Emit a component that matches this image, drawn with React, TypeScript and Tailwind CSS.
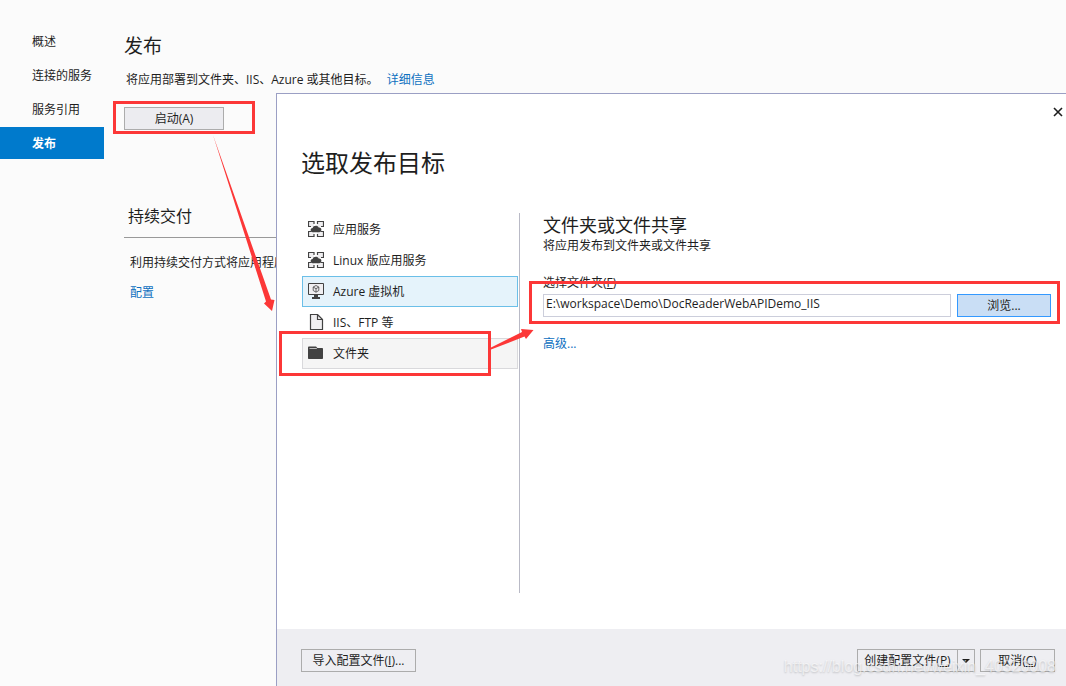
import { useState } from "react";
import type { ReactNode } from "react";

interface Target {
  id: string;
  label: string;
  icon: ReactNode;
  rowClass: string;
}

function AppServiceIcon() {
  return (
    <svg viewBox="0 0 16 16" className="mb-0.5 h-4 w-4" aria-hidden="true">
      <path d="M0 0h6v6H0ZM9 0h7v6H9ZM0 10h6v6H0ZM9 10h7v6H9Z" fill="#f0eff1" />
      <path
        d="M3 5.500H.5v-5h5.500V3M9.500 3V.5h6v5H13M3 10.500H.5v5h5.500V13M13 10.500h2.500v5h-6V13"
        fill="none"
        stroke="#424242"
        strokeWidth="1.200"
      />
      <path
        d="M4.800 11.300A2.200 2.200 0 0 1 2.600 9c0-1.200.9-2 2-2C5 5.500 6.200 4.700 7.800 4.700c1.400 0 2.400.6 2.900 1.700A2.500 2.500 0 0 1 13.400 9a2.300 2.300 0 0 1-2.300 2.300Z"
        fill="#424242"
      />
    </svg>
  );
}

function VirtualMachineIcon() {
  return (
    <svg viewBox="0 0 16 16" className="mb-0.5 h-4 w-4" aria-hidden="true">
      <path d="M.5.5h15v11H.5Z" fill="#f0eff1" stroke="#424242" />
      <path d="M6 12h4v2h2v2H4v-2h2Z" fill="#424242" />
      <path
        d="m8 2.500 2.800 1.500v3.500L8 9.200 5.200 7.500V4ZM5.200 4 8 5.700 10.800 4M8 5.700v3.500"
        fill="none"
        stroke="#424242"
        strokeWidth=".8"
      />
    </svg>
  );
}

function FileIcon() {
  return (
    <svg viewBox="0 0 16 16" className="mb-0.5 h-4 w-4" aria-hidden="true">
      <path d="M2.500.5h8l4 4v11h-12Z" fill="#f0eff1" />
      <path
        d="M2.500.5h7l5 5v10h-12ZM9.500.5v5h5"
        fill="none"
        stroke="#424242"
        strokeWidth="1.200"
      />
    </svg>
  );
}

function FolderIcon() {
  return (
    <svg viewBox="0 0 16 16" className="mb-0.5 h-4 w-4" aria-hidden="true">
      <path
        d="M0 2.500C0 2 .5 1.500 1 1.500h7L9.500 3H14c.6 0 1 .4 1 1v9c0 .6-.4 1-1 1H1c-.6 0-1-.4-1-1Z"
        fill="#424242"
      />
      <path d="M1.500 3.500h7l1-1" fill="none" stroke="#f0eff1" strokeWidth=".7" />
    </svg>
  );
}

const navItems = ["概述", "连接的服务", "服务引用", "发布"];

const targets: Target[] = [
  {
    id: "app-service",
    label: "应用服务",
    icon: <AppServiceIcon />,
    rowClass: "border-transparent",
  },
  {
    id: "linux",
    label: "Linux 版应用服务",
    icon: <AppServiceIcon />,
    rowClass: "border-transparent",
  },
  {
    id: "vm",
    label: "Azure 虚拟机",
    icon: <VirtualMachineIcon />,
    rowClass: "border-[#6bbfe8] bg-[#e5f3fb]",
  },
  {
    id: "iis",
    label: "IIS、FTP 等",
    icon: <FileIcon />,
    rowClass: "border-transparent",
  },
  {
    id: "folder",
    label: "文件夹",
    icon: <FolderIcon />,
    rowClass: "border-[#d9d9dc] bg-[#f5f5f5]",
  },
];

function Sidebar() {
  return (
    <nav className="w-[104px] shrink-0 pt-[25px]">
      <ul className="flex flex-col gap-0.5">
        {navItems.map((item) => (
          <li key={item}>
            <a
              href="#"
              className={
                item === "发布"
                  ? "flex h-8 items-center bg-[#007acc] pt-0.5 pl-8 font-bold text-white"
                  : "flex h-8 items-center pt-0.5 pl-8"
              }
            >
              {item}
            </a>
          </li>
        ))}
      </ul>
    </nav>
  );
}

function PublishPage() {
  return (
    <main className="min-w-0 flex-1 pt-8 pl-5">
      <h1 className="text-[19px] leading-7">发布</h1>
      <p className="mt-2 flex h-6 items-center gap-2 pl-0.5">
        <span>将应用部署到文件夹、IIS、Azure 或其他目标。</span>
        <a href="#" className="text-[#0e70c0]">
          详细信息
        </a>
      </p>
      <button
        type="button"
        className="mt-[15px] block h-[23px] w-[100px] border border-[#acacac] bg-[#ececf0]"
      >
        启动(A)
      </button>
      <section className="mt-[70px]">
        <h2 className="border-b border-[#999] pb-[5px] pl-1 text-base leading-8">
          持续交付
        </h2>
        <p className="mt-[15px] pl-1.5 leading-5">
          利用持续交付方式将应用程序自动发布到 Azure。
        </p>
        <a href="#" className="mt-2.5 block pl-1.5 leading-5 text-[#0e70c0]">
          配置
        </a>
      </section>
    </main>
  );
}

function FolderForm() {
  const [path, setPath] = useState(
    "E:\\workspace\\Demo\\DocReaderWebAPIDemo_IIS"
  );

  return (
    <section className="min-w-0 flex-1 pr-[15px] pl-[23px]">
      <h2 className="text-lg leading-6">文件夹或文件共享</h2>
      <p className="leading-[18px]">将应用发布到文件夹或文件共享</p>
      <label htmlFor="folder" className="mt-[18px] block leading-5">
        选择文件夹(<u>F</u>)
      </label>
      <div className="mt-px flex gap-1.5">
        <input
          id="folder"
          value={path}
          onChange={(event) => setPath(event.target.value)}
          className="h-[23px] min-w-0 flex-1 border border-[#cccedb] bg-white px-0.5 pb-1 outline-none"
        />
        <button
          type="button"
          className="h-[23px] w-[94px] border border-[#3399ff] bg-[#c9def5]"
        >
          浏览...
        </button>
      </div>
      <a href="#" className="mt-[17px] block leading-5 text-[#0e70c0]">
        高级...
      </a>
    </section>
  );
}

function PublishDialog() {
  return (
    <div
      role="dialog"
      aria-labelledby="dialog-title"
      className="absolute top-[93px] right-0 bottom-0 left-[276px] flex flex-col border-t border-l border-[#9b9fc4] bg-white"
    >
      <div className="flex h-9 items-center justify-end pr-0.5">
        <button type="button" aria-label="关闭" className="p-px">
          <svg viewBox="0 0 10 10" className="h-2.5 w-2.5" aria-hidden="true">
            <path d="m1 1 8 8M9 1 1 9" stroke="#1e1e1e" strokeWidth="1.600" />
          </svg>
        </button>
      </div>
      <h1 id="dialog-title" className="mt-[15px] pl-6 text-2xl leading-9">
        选取发布目标
      </h1>
      <div className="mt-8 flex min-h-[380px] flex-1">
        <ul className="ml-[25px] w-[218px] shrink-0 border-r border-[#b9bac6] pt-px pr-px">
          {targets.map((target) => (
            <li key={target.id}>
              <button
                type="button"
                className={`flex h-[31px] w-full items-center gap-[9px] border pl-[5px] ${target.rowClass}`}
              >
                {target.icon}
                {target.label}
              </button>
            </li>
          ))}
        </ul>
        <FolderForm />
      </div>
      <footer className="mt-9 flex h-[57px] shrink-0 items-start bg-[#eeeef2] pt-5 pr-[11px] pl-6">
        <button
          type="button"
          className="h-[23px] w-[115px] border border-[#acacac]"
        >
          导入配置文件(<u>I</u>)...
        </button>
        <div className="ml-auto flex h-[23px] border border-[#acacac]">
          <button type="button" className="w-[100px] border-r border-[#acacac]">
            创建配置文件(<u>P</u>)
          </button>
          <button
            type="button"
            aria-label="更多"
            className="flex w-4 items-center justify-center"
          >
            <svg viewBox="0 0 8 4" className="h-1 w-2" aria-hidden="true">
              <path d="M0 0h8L4 4Z" fill="#1e1e1e" />
            </svg>
          </button>
        </div>
        <button
          type="button"
          className="ml-[5px] h-[23px] w-[75px] border border-[#acacac]"
        >
          取消(<u>C</u>)
        </button>
      </footer>
    </div>
  );
}

// red boxes and arrows that walk through the steps
function Annotations() {
  return (
    <div className="pointer-events-none absolute inset-0">
      <div className="absolute top-[101px] left-[113px] h-[33px] w-[142px] border-3 border-[#fc3737]" />
      <div className="absolute top-[331px] left-[279px] h-[45px] w-[212px] border-3 border-[#fc3737]" />
      <div className="absolute top-[281px] right-[6px] left-[529px] h-[43px] border-3 border-[#fc3737]" />
      <svg
        viewBox="0 0 540 360"
        className="absolute top-0 left-0 h-[360px] w-[540px]"
        fill="#fc3737"
        aria-hidden="true"
      >
        <path d="M213 135 271 299.500 274.500 300 272 311 264 303.500 266 301.500Z" />
        <path d="M490 348 522 332 521 329 533.500 330 526 339 524.500 336.500 491 349.500Z" />
      </svg>
    </div>
  );
}

export default function App() {
  return (
    <div className="relative flex min-h-screen overflow-hidden bg-[#fbfbfb] font-['Open_Sans','Noto_Sans_CJK_SC',sans-serif] text-xs text-[#1e1e1e]">
      <Sidebar />
      <PublishPage />
      <PublishDialog />
      <Annotations />
      <p className="pointer-events-none absolute right-2.5 bottom-[7px] font-['Liberation_Sans',sans-serif] text-base leading-6 text-white/60 [text-shadow:0_1px_2px_rgb(0_0_0/0.2)]">
        https://blog.csdn.net/weixin_40320008
      </p>
    </div>
  );
}
